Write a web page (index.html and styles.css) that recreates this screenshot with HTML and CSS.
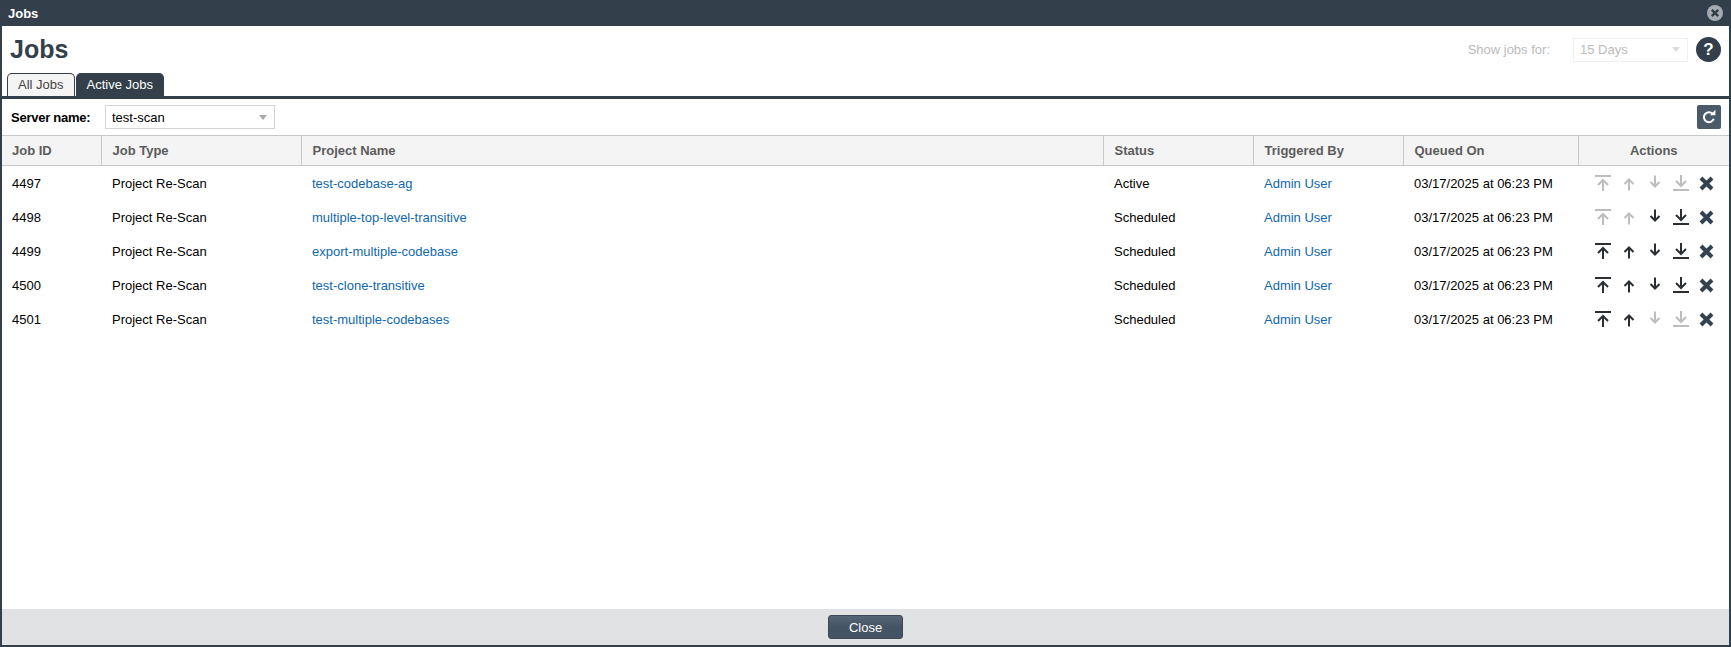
FILE: index.html
```html
<!DOCTYPE html>
<html lang="en">
<head>
<meta charset="utf-8">
<title>Jobs</title>
<link rel="stylesheet" href="styles.css">
</head>
<body>
<svg class="defs" width="0" height="0">
  <symbol id="i-top" viewBox="0 0 16 16"><path d="M0 1h16M8 16V5M3 10l5-5 5 5" fill="none" stroke="currentColor" stroke-width="2"/></symbol>
  <symbol id="i-up" viewBox="0 0 16 16"><path d="M8 15.5V4.5M3.5 9L8 4.5 12.5 9" fill="none" stroke="currentColor" stroke-width="2"/></symbol>
  <symbol id="i-down" viewBox="0 0 16 16"><path d="M8 .5v11M3.5 7L8 11.5 12.5 7" fill="none" stroke="currentColor" stroke-width="2"/></symbol>
  <symbol id="i-bottom" viewBox="0 0 16 16"><path d="M0 15h16M8 0v11M3 6l5 5 5-5" fill="none" stroke="currentColor" stroke-width="2"/></symbol>
  <symbol id="i-x" viewBox="0 0 15 15"><path d="M2 2l11 11M13 2L2 13" fill="none" stroke="currentColor" stroke-width="4"/></symbol>
</svg>
<div class="dialog">
  <header class="titlebar">
    <span class="titlebar-text">Jobs</span>
    <span class="titlebar-close"><svg viewBox="0 0 16 16" width="16" height="16"><circle cx="8" cy="8" r="8" fill="#a5abb1"/><path d="M4.8 4.8l6.4 6.4M11.2 4.8l-6.4 6.4" stroke="#333f4a" stroke-width="2.4"/></svg></span>
  </header>
  <div class="body">
    <div class="heading-row">
      <h1 class="heading">Jobs</h1>
      <div class="range">
        <span class="range-label">Show jobs for:</span>
        <span class="select select-disabled"><span>15 Days</span><i class="caret"></i></span>
        <span class="help">?</span>
      </div>
    </div>
    <nav class="tabs">
      <a class="tab">All Jobs</a>
      <a class="tab tab-active">Active Jobs</a>
    </nav>
    <div class="toolbar">
      <label class="server-label">Server name:</label>
      <span class="select select-server"><span>test-scan</span><i class="caret"></i></span>
      <button class="refresh" aria-label="Refresh"><svg viewBox="0 0 16 16" width="16" height="16"><path d="M12.7 9.8A5 5 0 1 1 11.6 4.8" fill="none" stroke="#fff" stroke-width="2"/><path d="M9 6.2h5.4V.8z" fill="#fff"/></svg></button>
    </div>
    <table class="jobs">
      <colgroup>
        <col class="c-id"><col class="c-type"><col class="c-name"><col class="c-status"><col class="c-by"><col class="c-on"><col class="c-act">
      </colgroup>
      <thead>
        <tr><th>Job ID</th><th>Job Type</th><th>Project Name</th><th>Status</th><th>Triggered By</th><th>Queued On</th><th class="th-act">Actions</th></tr>
      </thead>
      <tbody>
        <tr><td>4497</td><td>Project Re-Scan</td><td><a>test-codebase-ag</a></td><td>Active</td><td><a>Admin User</a></td><td>03/17/2025 at 06:23 PM</td>
          <td class="acts"><div class="act-row"><svg class="ic off"><use href="#i-top"/></svg><svg class="ic off"><use href="#i-up"/></svg><svg class="ic off"><use href="#i-down"/></svg><svg class="ic off"><use href="#i-bottom"/></svg><svg class="ic-x"><use href="#i-x"/></svg></div></td></tr>
        <tr><td>4498</td><td>Project Re-Scan</td><td><a>multiple-top-level-transitive</a></td><td>Scheduled</td><td><a>Admin User</a></td><td>03/17/2025 at 06:23 PM</td>
          <td class="acts"><div class="act-row"><svg class="ic off"><use href="#i-top"/></svg><svg class="ic off"><use href="#i-up"/></svg><svg class="ic"><use href="#i-down"/></svg><svg class="ic"><use href="#i-bottom"/></svg><svg class="ic-x"><use href="#i-x"/></svg></div></td></tr>
        <tr><td>4499</td><td>Project Re-Scan</td><td><a>export-multiple-codebase</a></td><td>Scheduled</td><td><a>Admin User</a></td><td>03/17/2025 at 06:23 PM</td>
          <td class="acts"><div class="act-row"><svg class="ic"><use href="#i-top"/></svg><svg class="ic"><use href="#i-up"/></svg><svg class="ic"><use href="#i-down"/></svg><svg class="ic"><use href="#i-bottom"/></svg><svg class="ic-x"><use href="#i-x"/></svg></div></td></tr>
        <tr><td>4500</td><td>Project Re-Scan</td><td><a>test-clone-transitive</a></td><td>Scheduled</td><td><a>Admin User</a></td><td>03/17/2025 at 06:23 PM</td>
          <td class="acts"><div class="act-row"><svg class="ic"><use href="#i-top"/></svg><svg class="ic"><use href="#i-up"/></svg><svg class="ic"><use href="#i-down"/></svg><svg class="ic"><use href="#i-bottom"/></svg><svg class="ic-x"><use href="#i-x"/></svg></div></td></tr>
        <tr><td>4501</td><td>Project Re-Scan</td><td><a>test-multiple-codebases</a></td><td>Scheduled</td><td><a>Admin User</a></td><td>03/17/2025 at 06:23 PM</td>
          <td class="acts"><div class="act-row"><svg class="ic"><use href="#i-top"/></svg><svg class="ic"><use href="#i-up"/></svg><svg class="ic off"><use href="#i-down"/></svg><svg class="ic off"><use href="#i-bottom"/></svg><svg class="ic-x"><use href="#i-x"/></svg></div></td></tr>
      </tbody>
    </table>
    <footer class="footer"><button class="close-btn">Close</button></footer>
  </div>
</div>
</body>
</html>
```
FILE: styles.css
```css
* { box-sizing: border-box; }
html, body { height: 100%; }
body {
  margin: 0;
  background: #fff;
  font-family: "Liberation Sans", Arial, sans-serif;
  font-size: 13px;
  color: #000;
  overflow: hidden;
}
.defs { position: absolute; }
.dialog {
  height: 647px;
  display: flex;
  flex-direction: column;
  border: 2px solid #333f4a;
  border-top: 0;
}
.titlebar {
  height: 26px;
  margin: 0 -2px;
  padding: 0 8px 0 8px;
  background: #333f4a;
  display: flex;
  align-items: center;
  justify-content: space-between;
  color: #fff;
  font-weight: bold;
  font-size: 13px;
}
.titlebar-close { display: flex; }
.body { flex: 1; display: flex; flex-direction: column; min-height: 0; }
.heading-row {
  height: 47px;
  display: flex;
  justify-content: space-between;
  align-items: flex-start;
  padding: 0 8px 0 8px;
}
.heading {
  margin: 8px 0 0;
  font-size: 25px;
  line-height: 30px;
  font-weight: bold;
  color: #333f4a;
}
.range { display: flex; align-items: center; margin-top: 11px; color: #bbb; }
.range-label { margin-right: 23px; }
.select {
  display: flex;
  align-items: center;
  justify-content: space-between;
  height: 24px;
  background: #fff;
  border: 1px solid #d4d4d4;
  padding: 0 7px 0 6px;
}
.select-disabled { width: 115px; border-color: #efefef; color: #bbb; margin-right: 8px; }
.select-disabled .caret { border-top-color: #dcdcdc; }
.select-server { width: 170px; color: #000; }
.caret {
  width: 0; height: 0;
  border-left: 4.5px solid transparent;
  border-right: 4.5px solid transparent;
  border-top: 5px solid #a9a9a9;
}
.help {
  width: 25px; height: 25px;
  border-radius: 50%;
  background: #333f4a;
  color: #fff;
  font-weight: bold;
  font-size: 17px;
  display: flex;
  align-items: center;
  justify-content: center;
}
.tabs {
  display: flex;
  gap: 1px;
  padding-left: 5px;
  height: 26px;
  border-bottom: 3px solid #333f4a;
}
.tab {
  height: 23px;
  padding: 0 10px;
  line-height: 22px;
  border: 1px solid #333f4a;
  border-bottom: 0;
  border-radius: 5px 5px 0 0;
  background: #f4f4f4;
  color: #444;
  font-size: 13px;
}
.tab-active { background: #333f4a; color: #fff; }
.toolbar {
  height: 36px;
  display: flex;
  align-items: center;
  padding: 0 8px 0 9px;
}
.server-label { font-weight: bold; width: 94px; letter-spacing: -0.25px; }
.refresh {
  margin-left: auto;
  width: 24px; height: 24px;
  padding: 0;
  border: 0;
  border-radius: 2px;
  background: #4a5a69;
  display: flex;
  align-items: center;
  justify-content: center;
}
.jobs {
  width: 100%;
  table-layout: fixed;
  border-collapse: collapse;
  font-size: 13px;
}
.c-id { width: 99px; }
.c-type { width: 200px; }
.c-name { width: 802px; }
.c-status { width: 150px; }
.c-by { width: 150px; }
.c-on { width: 175px; }
.jobs th {
  height: 30px;
  padding: 0 10px 0 11px;
  text-align: left;
  background: #f4f4f4;
  color: #5c5c5c;
  font-weight: bold;
  border-top: 1px solid #c8c8c8;
  border-bottom: 1px solid #c8c8c8;
  border-left: 1px solid #c8c8c8;
}
.jobs th:first-child { border-left: 0; padding-left: 10px; }
.jobs .th-act { text-align: center; padding: 0; }
.jobs td {
  height: 34px;
  padding: 2px 10px 0 11px;
  color: #000;
  white-space: nowrap;
}
.jobs td:first-child { padding-left: 10px; }
.jobs a { color: #0f68ad; }
.jobs .acts { padding: 0; }
.act-row { display: flex; align-items: center; justify-content: center; padding-right: 4px; }
.ic { width: 16px; height: 16px; margin: 0 5px; color: #2b2f33; }
.ic.off { color: #bdbdbd; }
.ic-x { width: 15px; height: 15px; margin: 2px 0 0 5px; color: #334150; }
.footer {
  margin-top: auto;
  height: 36px;
  background: #e1e2e4;
  display: flex;
  align-items: center;
  justify-content: center;
}
.close-btn {
  width: 75px;
  height: 24px;
  padding: 0;
  border: 1px solid #3c4a57;
  border-radius: 3px;
  background: linear-gradient(#566676, #455463 50%);
  color: #fff;
  font-family: inherit;
  font-size: 13px;
  font-weight: normal;
}
```
